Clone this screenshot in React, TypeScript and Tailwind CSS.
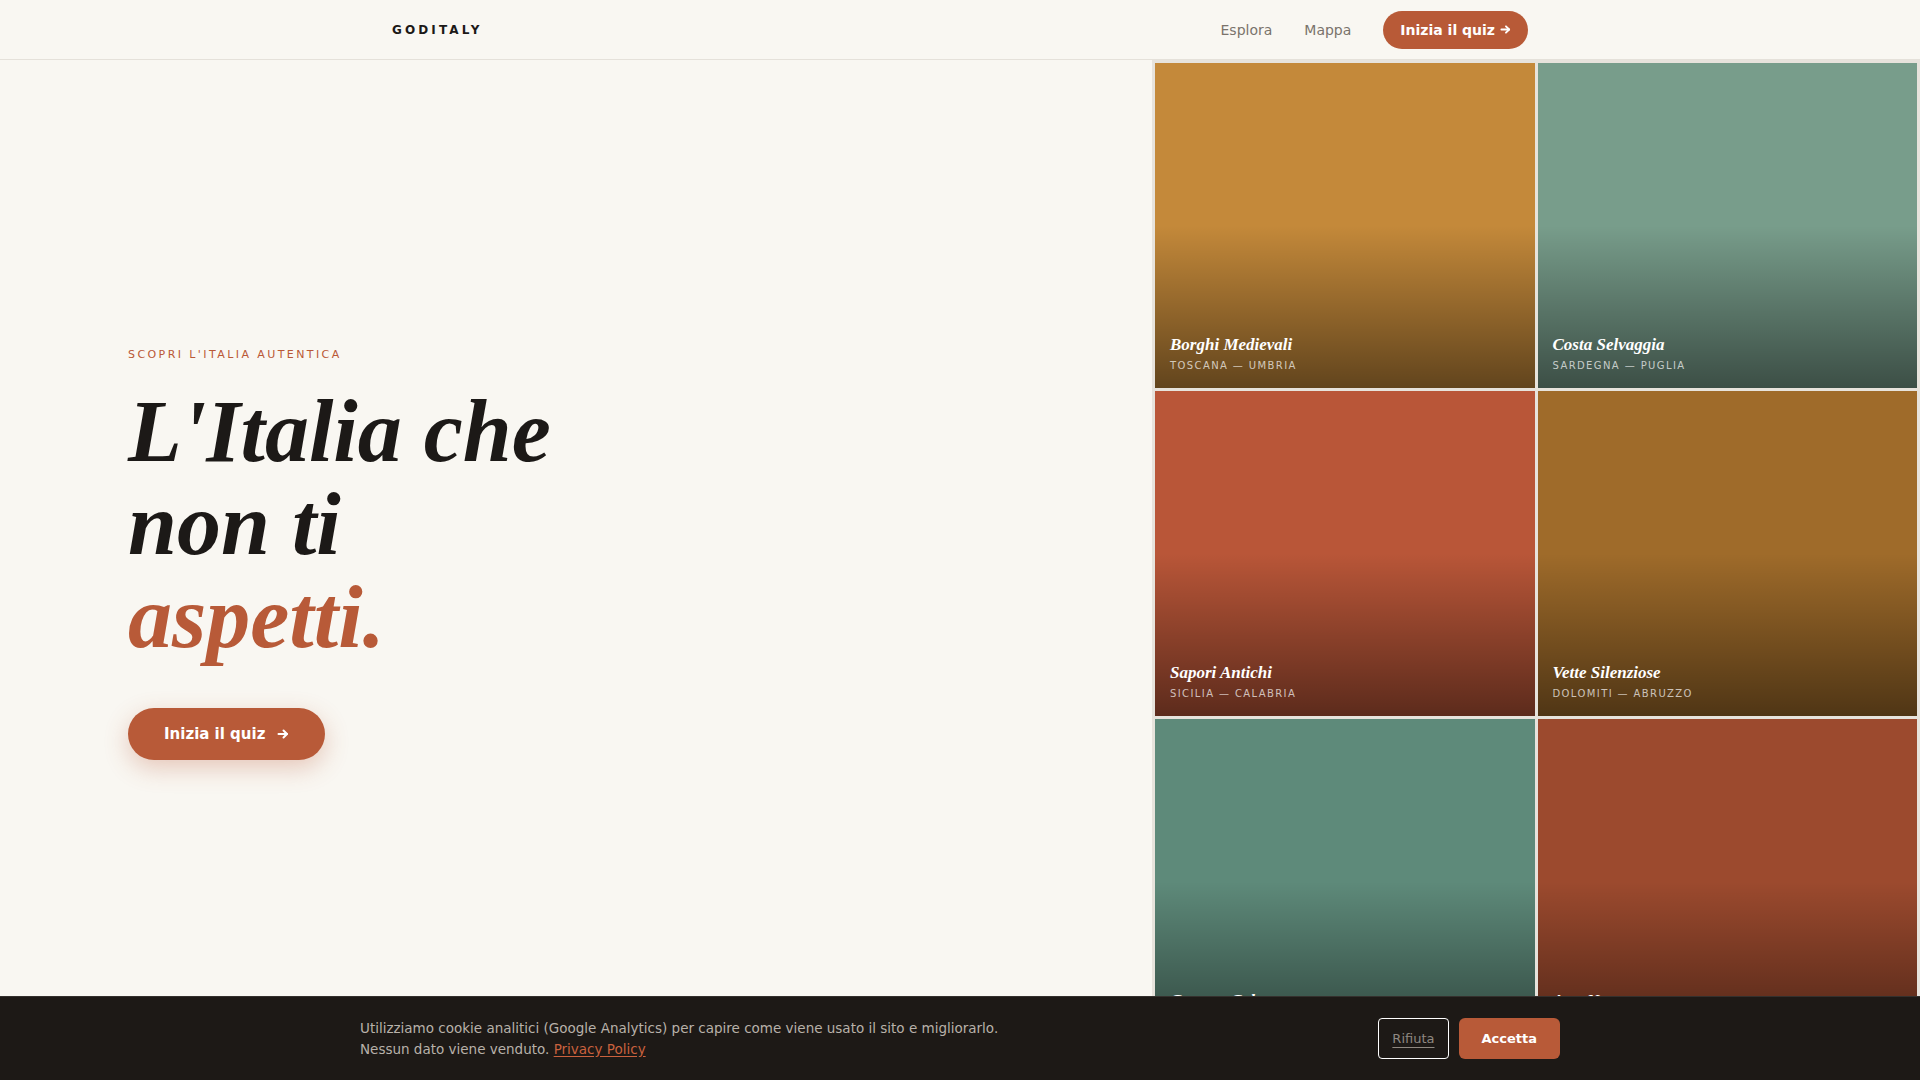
import React from 'react'

type Tile = {
  title: string
  regions: string
  color: string
}

const tiles: Tile[] = [
  { title: 'Borghi Medievali', regions: 'TOSCANA — UMBRIA', color: 'bg-[#c4893a]' },
  { title: 'Costa Selvaggia', regions: 'SARDEGNA — PUGLIA', color: 'bg-[#789d8b]' },
  { title: 'Sapori Antichi', regions: 'SICILIA — CALABRIA', color: 'bg-[#b95638]' },
  { title: 'Vette Silenziose', regions: 'DOLOMITI — ABRUZZO', color: 'bg-[#9f6b2a]' },
  { title: 'Grotte e Calette', regions: 'CAMPANIA — LIGURIA', color: 'bg-[#5e8a7a]' },
  { title: 'Arte Nascosta', regions: 'LAZIO — MARCHE', color: 'bg-[#9c4a2e]' },
]

const serif = "font-['Liberation_Serif',Georgia,serif]"

// small bold arrow used in both quiz buttons
function Arrow({ size = 12 }: { size?: number }) {
  return (
    <svg width={size} height={size} viewBox="0 0 12 12" fill="none" stroke="currentColor" strokeWidth={2} strokeLinecap="round" strokeLinejoin="round">
      <path d="M1.5 6h8.5" />
      <path d="M6.5 2.5 10 6l-3.5 3.5" />
    </svg>
  )
}

/* 
   Tile - one destination card in the right grid
    */
function DestinationTile({ tile }: { tile: Tile }) {
  return (
    <div className={`relative h-[325px] overflow-hidden ${tile.color}`}>
      <div className="absolute inset-0 bg-gradient-to-b from-transparent from-50% to-black/50" />
      <div className="relative flex h-full flex-col justify-end px-[15px] pb-[15px]">
        <h3 className={`${serif} text-[17px] font-bold italic leading-[22px] text-white`}>{tile.title}</h3>
        <div className="mt-[3px] text-[10px] leading-[14px] tracking-[0.14em] text-white/70">{tile.regions}</div>
      </div>
    </div>
  )
}

export default function App() {
  return (
    <div className="min-h-screen bg-[#f9f7f2] font-['DejaVu_Sans',Verdana,sans-serif] text-[#1c1917]">
      {/* NAV */}
      <header className="h-[60px] border-b border-[#e5e1da]">
        <div className="mx-auto flex h-full max-w-[1136px] items-center justify-between">
          <div className="text-[12px] font-bold tracking-[0.26em] text-[#1c1917]">GODITALY</div>
          <nav className="flex items-center gap-8">
            <a className="text-sm text-[#7a736b]">Esplora</a>
            <a className="text-sm text-[#7a736b]">Mappa</a>
            <button className="flex items-center gap-[5px] rounded-full bg-[#b85a37] px-[17px] py-[9px] text-sm font-bold leading-5 text-white">
              Inizia il quiz
              <Arrow size={11} />
            </button>
          </nav>
        </div>
      </header>

      {/* HERO */}
      <main className="flex">
        <section className="flex w-3/5 items-center px-32">
          <div>
            <div className="mb-[22px] text-[11px] leading-4 tracking-[0.22em] text-[#b95836]">
              SCOPRI L&apos;ITALIA AUTENTICA
            </div>
            <h1 className={`${serif} text-[88px] font-bold italic leading-[93px] text-[#1c1917]`}>
              L&apos;Italia che
              <br />
              non ti
              <br />
              <span className="text-[#b85a38]">aspetti.</span>
            </h1>
            <button className="mt-[44px] flex h-[52px] items-center gap-3 rounded-full bg-[#b85a38] px-9 text-[15px] font-bold text-white shadow-[0_8px_24px_rgba(184,90,56,0.3)]">
              Inizia il quiz
              <Arrow size={12} />
            </button>
          </div>
        </section>

        <section className="grid w-2/5 grid-cols-2 gap-[3px] bg-[#e7e3dc] p-[3px]">
          {tiles.map(t => (
            <DestinationTile key={t.title} tile={t} />
          ))}
        </section>
      </main>

      {/* COOKIE BAR */}
      <div className="fixed inset-x-0 bottom-0 h-[84px] border-t border-white/10 bg-[#1d1916]">
        <div className="mx-auto flex h-full max-w-[1200px] items-center justify-between">
          <p className="max-w-[672px] text-[13.5px] leading-[21px] text-[#b8b1a9]">
            Utilizziamo cookie analitici (Google Analytics) per capire come viene usato il sito e migliorarlo. Nessun
            dato viene venduto.{' '}
            <a className="text-[#c9613e] underline underline-offset-2">Privacy Policy</a>
          </p>
          <div className="flex items-center gap-2.5">
            <button className="h-[41px] rounded border border-white px-[13px] text-[13px] text-[#8f8881] underline underline-offset-4">
              Rifiuta
            </button>
            <button className="h-[41px] rounded-md bg-[#b85a38] px-[23px] text-[13px] font-bold text-white">
              Accetta
            </button>
          </div>
        </div>
      </div>
    </div>
  )
}
